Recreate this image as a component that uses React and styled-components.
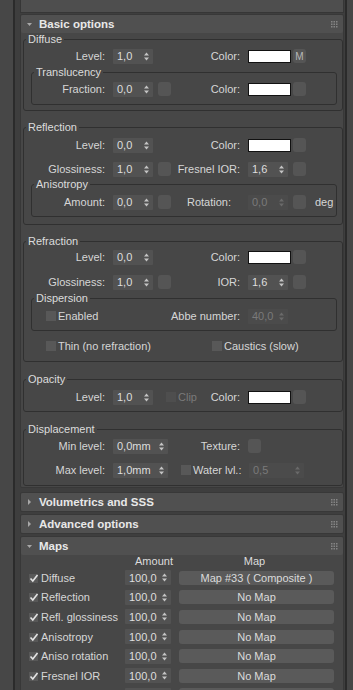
import styled, { createGlobalStyle } from 'styled-components'

const Global = createGlobalStyle`
  html, body { margin: 0; padding: 0; background: #3e3e3e; }
  body {
    font-family: "Liberation Sans", Arial, sans-serif;
    font-size: 11px;
    color: #d6d6d6;
  }
`

const Screen = styled.div`
  display: flex;
  width: 353px;
  height: 690px;
  overflow: hidden;
  background: #3e3e3e;
`

const LeftRail = styled.div`
  flex: none;
  width: 13px;
  margin-right: 4px;
  background: #474747;
  border-right: 2px solid #2b2b2b;
`

const RightRail = styled.div`
  flex: none;
  width: 6px;
  background: #464646;
  border-left: 2px solid #2b2b2b;
`

const Panel = styled.div`
  flex: 1;
  min-width: 0;
  display: flex;
  flex-direction: column;
  padding: 0 1px 0 1px;
  & > * { flex-shrink: 0; }
`

const TopStub = styled.div`
  height: 12px;
  background: #4e4e4e;
  border: 1px solid #363636;
  border-top: none;
`

const Rollout = styled.section`
  margin-top: ${p => p.$mt || 0}px;
  background: #474747;
  border: 1px solid #383838;
  border-radius: 2px;
`

const Header = styled.div`
  height: 18px;
  display: flex;
  align-items: center;
  padding: 0 5px 0 6px;
  background: #505050;
  border-radius: 2px;
  font-size: 11.5px;
  font-weight: bold;
  color: #e8e8e8;
`

const HeaderTitle = styled.span`
  flex: 1;
  margin-left: 7px;
`

const Body = styled.div`
  padding: 0 0 1px 1px;
`

const Group = styled.fieldset`
  margin: ${p => p.$mt || 0}px ${p => (p.$sub ? 5 : 0)}px 0 ${p => (p.$sub ? 7 : 1)}px;
  padding: 0 0 ${p => p.$pb || 6}px 0;
  min-width: 0;
  border: 1px solid #303030;
  border-radius: 3px;
`

const Legend = styled.legend`
  margin-left: 2px;
  padding: 0 2px;
  line-height: 13px;
  font-size: 11px;
  color: #dcdcdc;
`

const Row = styled.div`
  display: flex;
  align-items: center;
  height: 16px;
  margin-top: ${p => p.$mt || 0}px;
`

const Label = styled.span`
  flex: none;
  width: ${p => p.$w}px;
  box-sizing: border-box;
  text-align: ${p => (p.$left ? 'left' : 'right')};
  padding: ${p => (p.$left ? `0 0 0 ${p.$pl || 0}px` : '0 8px 0 0')};
  white-space: nowrap;
`

const SpinBox = styled.div`
  flex: none;
  width: ${p => p.$w || 40}px;
  height: 15px;
  box-sizing: border-box;
  display: flex;
  align-items: center;
  justify-content: space-between;
  padding: 0 4px 0 4px;
  background: ${p => (p.$off ? '#4b4b4b' : '#525252')};
  color: ${p => (p.$off ? '#7a7a7a' : '#dedede')};
  border-radius: 1px;
  margin-left: ${p => p.$ml || 0}px;
`

const Swatch = styled.div`
  flex: none;
  width: 43px;
  height: 13px;
  box-sizing: border-box;
  background: #ffffff;
  border: 1px solid #111;
`

const Square = styled.div`
  flex: none;
  width: 13px;
  height: 14px;
  margin-left: ${p => p.$ml || 0}px;
  background: #555555;
  border-radius: 3px;
  display: flex;
  align-items: center;
  justify-content: center;
  font-size: 10px;
  color: #b8b8b8;
`

const Box = styled.span`
  flex: none;
  width: 10px;
  height: 10px;
  margin-right: 2px;
  background: ${p => (p.$off ? '#4e4e4e' : '#585858')};
`

const CheckCell = styled.div`
  flex: none;
  display: flex;
  align-items: center;
  width: ${p => p.$w}px;
  box-sizing: border-box;
  padding-left: ${p => p.$pl || 0}px;
  color: ${p => (p.$off ? '#7a7a7a' : 'inherit')};
  white-space: nowrap;
`

const Unit = styled.span`
  margin-left: 9px;
`

const MapsHead = styled.div`
  display: flex;
  height: 13px;
  line-height: 13px;
  color: #dcdcdc;
`

const HeadCell = styled.span`
  flex: none;
  width: ${p => p.$w}px;
  text-align: ${p => (p.$center ? 'center' : 'left')};
`

const MapRow = styled.div`
  display: flex;
  align-items: center;
  height: 19.6px;
  padding-left: 8px;
`

const MapName = styled.span`
  flex: none;
  width: 84px;
  margin-left: 2px;
  white-space: nowrap;
`

const MapButton = styled.div`
  flex: none;
  width: 155px;
  height: 14px;
  margin-left: 8px;
  background: #5a5a5a;
  border-radius: 3px;
  text-align: center;
  line-height: 14px;
  color: #dadada;
  white-space: nowrap;
`

function Arrows({ off }) {
  const c = off ? '#6a6a6a' : '#c4c4c4'
  return (
    <svg width="5" height="9" viewBox="0 0 5 9">
      <polygon points="0,3.5 2.5,0.5 5,3.5" fill={c} />
      <polygon points="0,5.5 2.5,8.5 5,5.5" fill={c} />
    </svg>
  )
}

function Spinner({ value, w, off, ml }) {
  return (
    <SpinBox $w={w} $off={off} $ml={ml}>
      <span>{value}</span>
      <Arrows off={off} />
    </SpinBox>
  )
}

function Grip() {
  const dots = []
  for (let r = 0; r < 3; r++)
    for (let c = 0; c < 3; c++)
      dots.push(<rect key={r * 3 + c} x={c * 2.5} y={r * 2.5} width="1.5" height="1.5" fill="#858585" />)
  return <svg width="7" height="7" viewBox="0 0 7 7">{dots}</svg>
}

function Caret({ open }) {
  return open ? (
    <svg width="5" height="5" viewBox="0 0 5 5"><polygon points="0,1 5,1 2.5,4" fill="#a8a8a8" /></svg>
  ) : (
    <svg width="5" height="6" viewBox="0 0 5 6"><polygon points="1,0 4,3 1,6" fill="#a8a8a8" /></svg>
  )
}

function RollHeader({ title, open }) {
  return (
    <Header>
      <Caret open={open} />
      <HeaderTitle>{title}</HeaderTitle>
      <Grip />
    </Header>
  )
}

function Tick() {
  return (
    <svg width="10" height="10" viewBox="0 0 10 10">
      <rect x="0" y="1" width="9" height="9" fill="#585858" />
      <polyline points="1.5,5.5 3.8,8 8.5,2" fill="none" stroke="#e4e4e4" strokeWidth="1.6" />
    </svg>
  )
}

const maps = [
  ['Diffuse', 'Map #33  ( Composite )'],
  ['Reflection', 'No Map'],
  ['Refl. glossiness', 'No Map'],
  ['Anisotropy', 'No Map'],
  ['Aniso rotation', 'No Map'],
  ['Fresnel IOR', 'No Map'],
  ['Refraction', 'No Map'],
]

export default function App() {
  return (
    <Screen>
      <Global />
      <LeftRail />
      <Panel>
        <TopStub />
        <Rollout $mt={1}>
          <RollHeader title="Basic options" open />
          <Body>
            <Group $pb={5}>
              <Legend>Diffuse</Legend>
              <Row $mt={2}>
                <Label $w={89}>Level:</Label>
                <Spinner value="1,0" />
                <Label $w={95}>Color:</Label>
                <Swatch />
                <Square $ml={2}>M</Square>
              </Row>
              <Group $sub $mt={2} $pb={7}>
                <Legend>Translucency</Legend>
                <Row $mt={2}>
                  <Label $w={81}>Fraction:</Label>
                  <Spinner value="0,0" />
                  <Square $ml={5} />
                  <Label $w={77}>Color:</Label>
                  <Swatch />
                  <Square $ml={2} />
                </Row>
              </Group>
            </Group>

            <Group $mt={10} $pb={7}>
              <Legend>Reflection</Legend>
              <Row $mt={3}>
                <Label $w={89}>Level:</Label>
                <Spinner value="0,0" />
                <Label $w={95}>Color:</Label>
                <Swatch />
                <Square $ml={2} />
              </Row>
              <Row $mt={8}>
                <Label $w={89}>Glossiness:</Label>
                <Spinner value="1,0" />
                <Square $ml={5} />
                <Label $w={77}>Fresnel IOR:</Label>
                <Spinner value="1,6" />
                <Square $ml={5} />
              </Row>
              <Group $sub $mt={1} $pb={6}>
                <Legend>Anisotropy</Legend>
                <Row $mt={3}>
                  <Label $w={81}>Amount:</Label>
                  <Spinner value="0,0" />
                  <Square $ml={5} />
                  <Label $w={77} $left $pl={16}>Rotation:</Label>
                  <Spinner value="0,0" off />
                  <Square $ml={5} />
                  <Unit>deg</Unit>
                </Row>
              </Group>
            </Group>

            <Group $mt={10} $pb={7}>
              <Legend>Refraction</Legend>
              <Row $mt={1}>
                <Label $w={89}>Level:</Label>
                <Spinner value="0,0" />
                <Label $w={95}>Color:</Label>
                <Swatch />
                <Square $ml={2} />
              </Row>
              <Row $mt={9}>
                <Label $w={89}>Glossiness:</Label>
                <Spinner value="1,0" />
                <Square $ml={5} />
                <Label $w={77}>IOR:</Label>
                <Spinner value="1,6" />
                <Square $ml={5} />
              </Row>
              <Group $sub $mt={2} $pb={6}>
                <Legend>Dispersion</Legend>
                <Row $mt={3}>
                  <CheckCell $w={139} $pl={14}><Box />Enabled</CheckCell>
                  <Label $w={77}>Abbe number:</Label>
                  <Spinner value="40,0" off />
                </Row>
              </Group>
              <Row $mt={7}>
                <CheckCell $w={188} $pl={22}><Box />Thin (no refraction)</CheckCell>
                <CheckCell $w={100}><Box />Caustics (slow)</CheckCell>
              </Row>
            </Group>

            <Group $mt={11} $pb={6}>
              <Legend>Opacity</Legend>
              <Row $mt={3}>
                <Label $w={89}>Level:</Label>
                <Spinner value="1,0" />
                <CheckCell $w={52} $pl={13} $off><Box $off />Clip</CheckCell>
                <Label $w={43}>Color:</Label>
                <Swatch />
                <Square $ml={2} />
              </Row>
            </Group>

            <Group $mt={11} $pb={7}>
              <Legend>Displacement</Legend>
              <Row $mt={2}>
                <Label $w={89}>Min level:</Label>
                <Spinner value="0,0mm" w={55} />
                <Label $w={80}>Texture:</Label>
                <Square />
              </Row>
              <Row $mt={8}>
                <Label $w={89}>Max level:</Label>
                <Spinner value="1,0mm" w={55} />
                <CheckCell $w={81} $pl={13}><Box />Water lvl.:</CheckCell>
                <Spinner value="0,5" w={55} off />
              </Row>
            </Group>
          </Body>
        </Rollout>

        <Rollout $mt={4}>
          <RollHeader title="Volumetrics and SSS" />
        </Rollout>
        <Rollout $mt={2}>
          <RollHeader title="Advanced options" />
        </Rollout>
        <Rollout $mt={2}>
          <RollHeader title="Maps" open />
          <MapsHead>
            <HeadCell $w={104} />
            <HeadCell $w={58} $center>Amount</HeadCell>
            <HeadCell $w={143} $center>Map</HeadCell>
          </MapsHead>
          {maps.map(([name, map]) => (
            <MapRow key={name}>
              <Tick />
              <MapName>{name}</MapName>
              <Spinner value="100,0" w={46} />
              <MapButton>{map}</MapButton>
            </MapRow>
          ))}
        </Rollout>
      </Panel>
      <RightRail />
    </Screen>
  )
}
